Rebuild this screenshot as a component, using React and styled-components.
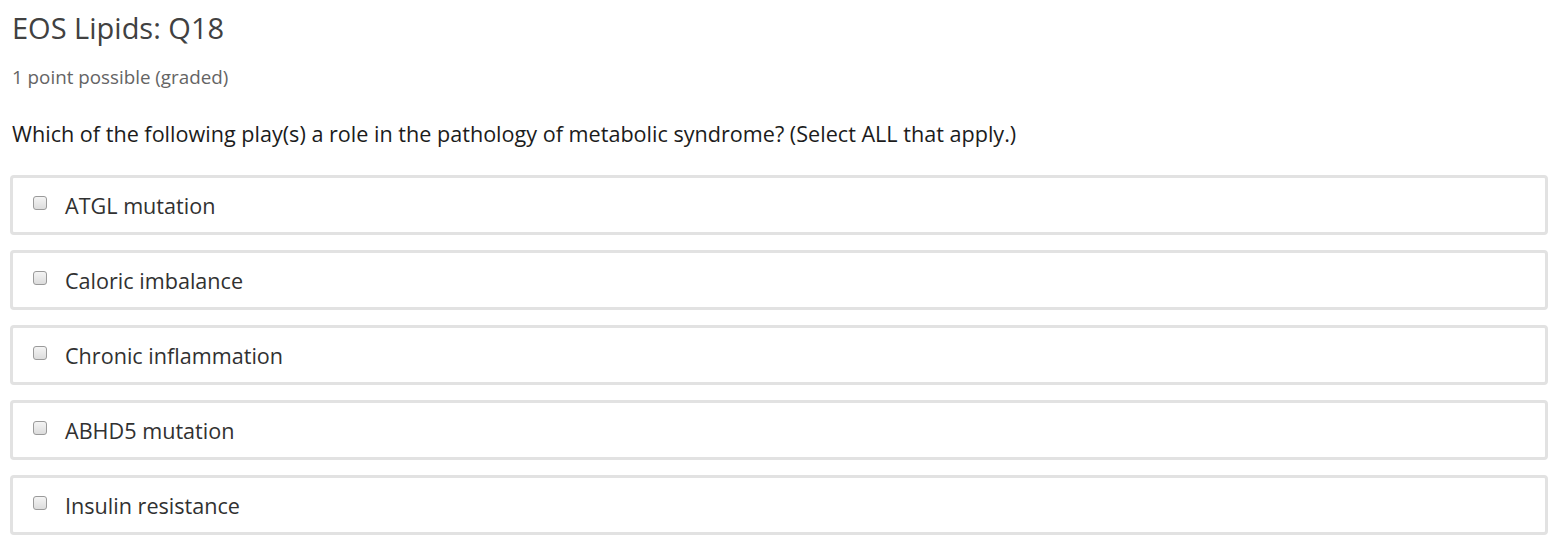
import styled, { createGlobalStyle } from 'styled-components';

const GlobalStyle = createGlobalStyle`
  body {
    margin: 0;
    background: #fff;
    font-family: "Open Sans", "Liberation Sans", sans-serif;
  }
`;

const Problem = styled.div`
  padding: 8px 15px 0 10px;
`;

const Title = styled.h3`
  margin: 0 0 0 2px;
  font-size: 29px;
  font-weight: 400;
  line-height: 40px;
  color: #414141;
`;

const Points = styled.div`
  margin: 16px 0 0 2px;
  font-size: 18.8px;
  line-height: 26px;
  color: #646464;
`;

const Question = styled.p`
  margin: 30px 0 0 2px;
  font-size: 21.6px;
  line-height: 28px;
  color: #1c1c1c;
`;

const Choices = styled.fieldset`
  margin: 27px 0 0;
  padding: 0;
  border: none;
  display: flex;
  flex-direction: column;
  gap: 15px;
`;

const Choice = styled.label`
  display: flex;
  align-items: center;
  gap: 18px;
  height: 54px;
  padding: 0 20px;
  border: 3px solid #e2e2e2;
  border-radius: 4px;
  font-size: 21.6px;
  color: #313131;
  cursor: pointer;
`;

const Box = styled.span`
  width: 12px;
  height: 12px;
  border: 1px solid #9a9a9a;
  border-radius: 3px;
  background: linear-gradient(#f4f4f4, #dcdcdc);
  margin-top: -5px;
  flex: none;
`;

const options = [
  'ATGL mutation',
  'Caloric imbalance',
  'Chronic inflammation',
  'ABHD5 mutation',
  'Insulin resistance',
];

export default function App() {
  return (
    <>
      <GlobalStyle />
      <Problem>
        <Title>EOS Lipids: Q18</Title>
        <Points>1 point possible (graded)</Points>
        <Question>
          Which of the following play(s) a role in the pathology of metabolic syndrome? (Select ALL that apply.)
        </Question>
        <Choices>
          {options.map((o) => (
            <Choice key={o}>
              <Box />
              {o}
            </Choice>
          ))}
        </Choices>
      </Problem>
    </>
  );
}
